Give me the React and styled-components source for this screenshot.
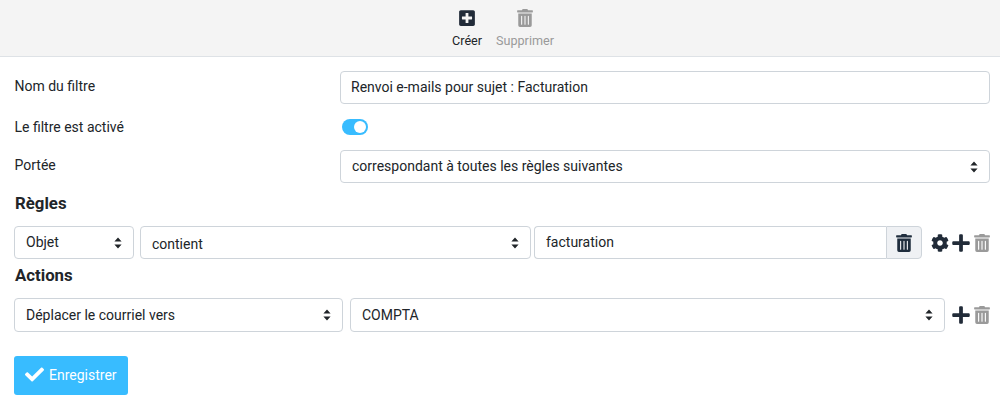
import styled, { createGlobalStyle } from 'styled-components';
import { FaPlusSquare, FaTrashAlt, FaCog, FaPlus, FaCheck } from 'react-icons/fa';

const GlobalStyle = createGlobalStyle`
  html, body {
    margin: 0;
    padding: 0;
    background: #fff;
    font-family: Roboto, "Liberation Sans", sans-serif;
    font-size: 14px;
    color: #212529;
  }
  * { box-sizing: border-box; }
`;

const arrows = `url("data:image/svg+xml,%3Csvg xmlns='http://www.w3.org/2000/svg' width='8' height='12' viewBox='0 0 8 12'%3E%3Cpath fill='%23212529' d='M4 0.5 L7.6 4.6 H0.4 Z M4 11.5 L0.4 7.4 H7.6 Z'/%3E%3C/svg%3E")`;

const Toolbar = styled.div`
  height: 57px;
  background: #f4f4f4;
  border-bottom: 1px solid #dee2e6;
  display: flex;
  justify-content: center;
  padding-left: 6px;
  gap: 14px;
`;

const ToolButton = styled.div`
  display: flex;
  flex-direction: column;
  align-items: center;
  padding-top: 9px;
  font-size: 12.6px;
  line-height: 14px;
  gap: 7px;
  color: ${(p) => (p.$disabled ? '#9a9a9a' : '#212529')};
  svg { display: block; }
`;

const Form = styled.div`
  padding: 14px 10px 0 14px;
`;

const Field = styled.div`
  display: grid;
  grid-template-columns: 326px 1fr;
  align-items: center;
  margin-bottom: ${(p) => p.$gap || 13}px;
`;

const Label = styled.div`
  padding-left: 0.5px;
  padding-bottom: 3px;
  line-height: 20px;
`;

const Input = styled.input`
  width: 100%;
  height: 33px;
  padding: 0 10px 1px ${(p) => (p.$joined ? 11 : 10)}px;
  border: 1px solid #ced4da;
  border-radius: 4px;
  font: inherit;
  color: #212529;
  background: #fff;
  outline: none;
  ${(p) => p.$joined && 'border-right: 0; border-radius: 4px 0 0 4px;'}
`;

const Select = styled.select`
  appearance: none;
  height: ${(p) => p.$height || 33}px;
  width: ${(p) => (p.$width ? `${p.$width}px` : '100%')};
  flex: ${(p) => (p.$width ? 'none' : '1')};
  padding: ${(p) => p.$pad || '0 24px 1px 11px'};
  border: 1px solid #ced4da;
  border-radius: 4px;
  font: inherit;
  color: #212529;
  background: #fff ${arrows} no-repeat right 11px center;
  outline: none;
`;

const Toggle = styled.div`
  position: relative;
  width: 26px;
  height: 16px;
  margin: 0 0 3px 2px;
  border-radius: 8px;
  background: #38bcff;
  &::after {
    content: '';
    position: absolute;
    top: 2px;
    right: 2px;
    width: 12px;
    height: 12px;
    border-radius: 50%;
    background: #fff;
  }
`;

const SectionTitle = styled.h2`
  margin: ${(p) => p.$top || 0}px 0 0;
  padding-left: 1px;
  font-size: 16.8px;
  font-weight: 700;
  line-height: 20px;
`;

const Row = styled.div`
  display: flex;
  align-items: center;
  margin-top: ${(p) => p.$top}px;
  gap: ${(p) => p.$gap}px;
`;

const InputGroup = styled.div`
  flex: none;
  display: flex;
  width: 388px;
  margin-left: -3px;
`;

const AddonButton = styled.div`
  flex: none;
  width: 36px;
  height: 33px;
  display: flex;
  align-items: center;
  justify-content: center;
  background: #eff1f4;
  border: 1px solid #ced4da;
  border-radius: 0 4px 4px 0;
  color: #1f2d3d;
`;

const RowIcons = styled.div`
  flex: none;
  display: flex;
  align-items: center;
  gap: 2px;
  margin-left: ${(p) => p.$left}px;
  color: #212b38;
  svg { display: block; }
`;

const SaveButton = styled.button`
  display: flex;
  align-items: center;
  gap: 5px;
  margin-top: 24px;
  width: 114px;
  height: 39px;
  padding: 0 0 2px 11px;
  border: 0;
  border-radius: 3px;
  background: #38bcff;
  color: #fff;
  font: inherit;
`;

export default function App() {
  return (
    <>
      <GlobalStyle />
      <Toolbar>
        <ToolButton>
          <FaPlusSquare size={18} color="#212b38" />
          Créer
        </ToolButton>
        <ToolButton $disabled>
          <FaTrashAlt size={18} color="#9a9a9a" />
          Supprimer
        </ToolButton>
      </Toolbar>
      <Form>
        <Field $gap={13}>
          <Label>Nom du filtre</Label>
          <Input readOnly value="Renvoi e-mails pour sujet : Facturation" />
        </Field>
        <Field $gap={10}>
          <Label>Le filtre est activé</Label>
          <Toggle />
        </Field>
        <Field $gap={10}>
          <Label>Portée</Label>
          <Select defaultValue="a">
            <option value="a">correspondant à toutes les règles suivantes</option>
          </Select>
        </Field>
        <SectionTitle>Règles</SectionTitle>
        <Row $top={13} $gap={6}>
          <Select $width={120} $pad="0 24px 2px 11px">
            <option>Objet</option>
          </Select>
          <Select $width={391} $pad="2px 24px 0 11px">
            <option>contient</option>
          </Select>
          <InputGroup>
            <Input $joined readOnly value="facturation" />
            <AddonButton>
              <FaTrashAlt size={18} />
            </AddonButton>
          </InputGroup>
          <RowIcons $left={3}>
            <FaCog size={18} />
            <FaPlus size={20} />
            <FaTrashAlt size={18} color="#9a9a9a" />
          </RowIcons>
        </Row>
        <SectionTitle $top={6}>Actions</SectionTitle>
        <Row $top={13} $gap={7}>
          <Select $width={329} $height={34}>
            <option>Déplacer le courriel vers</option>
          </Select>
          <Select $width={595} $height={34}>
            <option>COMPTA</option>
          </Select>
          <RowIcons $left={-1}>
            <FaPlus size={20} />
            <FaTrashAlt size={18} color="#9a9a9a" />
          </RowIcons>
        </Row>
        <SaveButton>
          <FaCheck size={19} />
          Enregistrer
        </SaveButton>
      </Form>
    </>
  );
}
